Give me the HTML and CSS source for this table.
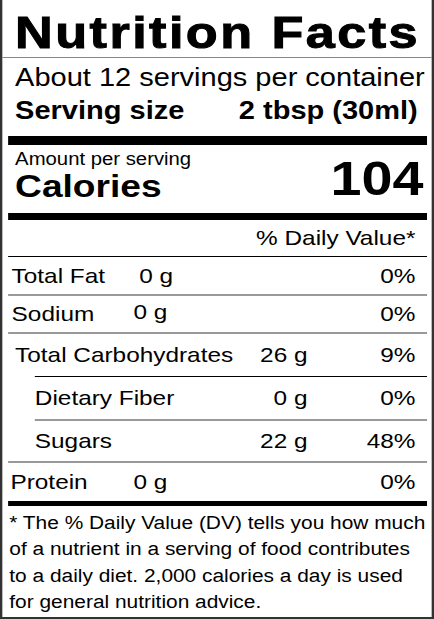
FILE: index.html
```html
<!DOCTYPE html>
<html lang="en">
<head>
    <meta charset="UTF-8">
    <meta name="viewport" content="width=device-width, initial-scale=1.0">
    <title>Nutrition Facts</title>
    <link rel="stylesheet" href="styles.css">
</head>
<body>
    <div class="label">
        <!-- 标题 -->
        <h1 class="title">Nutrition Facts</h1>
        <div class="serving">
            <p class="servings">About 12 servings per container</p>
            <p class="size"><span>Serving size</span><span>2 tbsp (30ml)</span></p>
        </div>
        <div class="bar bar-big"></div>
        <!-- 热量 -->
        <div class="calories">
            <div>
                <p class="amount">Amount per serving</p>
                <p class="cal-name">Calories</p>
            </div>
            <p class="cal-value">104</p>
        </div>
        <div class="bar bar-mid"></div>
        <p class="dv-head">% Daily Value*</p>
        <!-- 营养成分 -->
        <div class="row row-fat">
            <span class="name">Total Fat</span><span class="qty">0 g</span><span class="pct">0%</span>
        </div>
        <div class="row row-gray row-sodium">
            <span class="name">Sodium</span><span class="qty qty-up">0 g</span><span class="pct">0%</span>
        </div>
        <div class="row row-gray row-wide row-carbs">
            <span class="name">Total Carbohydrates</span><span class="qty">26 g</span><span class="pct">9%</span>
        </div>
        <div class="row row-wide row-sub row-fiber">
            <span class="name">Dietary Fiber</span><span class="qty">0 g</span><span class="pct">0%</span>
        </div>
        <div class="row row-wide row-sub row-gray row-sugars">
            <span class="name">Sugars</span><span class="qty">22 g</span><span class="pct">48%</span>
        </div>
        <div class="row row-gray row-protein">
            <span class="name">Protein</span><span class="qty">0 g</span><span class="pct">0%</span>
        </div>
        <div class="bar bar-small"></div>
        <p class="note">* The % Daily Value (DV) tells you how much of a nutrient in a serving of food contributes to a daily diet. 2,000 calories a day is used for general nutrition advice.</p>
    </div>
</body>
</html>
```

FILE: styles.css
```css
body {
    margin: 0;
    padding: 0;
    background: #fff;
    font-family: "Liberation Sans", Arial, sans-serif;
    color: #000;
    overflow: hidden;
}
p {
    margin: 0;
}
.label {
    box-sizing: border-box;
    width: 374px;
    height: 619px;
    border: 2px solid #333;
    border-top: none;
    padding: 0 4px 0 5px;
    transform: scaleX(1.1604);
    transform-origin: 0 0;
}

.title {
    margin: 0 -4px 0 -5px;
    padding: 10px 0 0 11px;
    height: 47px;
    font-size: 45px;
    line-height: 46px;
    font-weight: bold;
    letter-spacing: 2.1px;
    -webkit-text-stroke: 1px #000;
    border-bottom: 1px solid #888;
    white-space: nowrap;
}

.serving {
    padding: 4px 8px 0 6px;
}
.servings {
    font-size: 25px;
    line-height: 30px;
    white-space: nowrap;
}
.size {
    display: flex;
    justify-content: space-between;
    margin-top: 3px;
    font-size: 25px;
    line-height: 30px;
    font-weight: bold;
}

.bar {
    background: #000;
}
.bar-big {
    height: 9px;
    margin-top: 11px;
}
.bar-mid {
    height: 7px;
}
.bar-small {
    height: 5px;
}

.calories {
    display: flex;
    justify-content: space-between;
    align-items: flex-end;
    height: 68px;
    padding: 0 3px 0 6px;
}
.amount {
    font-size: 17.5px;
    line-height: 20px;
    padding-top: 6px;
}
.cal-name {
    font-size: 32px;
    line-height: 34px;
    font-weight: bold;
    padding-bottom: 10px;
}
.cal-value {
    font-size: 48px;
    line-height: 50px;
    font-weight: bold;
    padding-bottom: 9px;
}

.dv-head {
    text-align: right;
    font-size: 21px;
    line-height: 36px;
    padding-right: 10px;
    border-bottom: 1px solid #000;
}

.row {
    box-sizing: border-box;
    display: flex;
    align-items: center;
    font-size: 21px;
    padding: 0 10px 0 3px;
}
.row-gray {
    border-top: 2px solid #999;
}
.row-fat {
    height: 37px;
}
.row-sodium {
    height: 38px;
}
.row-carbs {
    height: 44px;
}
.row-fiber {
    height: 43px;
}
.row-sugars {
    height: 42px;
}
.row-protein {
    height: 40px;
    padding-left: 2px;
}
.row .name {
    width: 110px;
}
.row .qty {
    flex: 1;
}
.row .qty-up {
    margin: -5px 0 0 -5px;
}
.row-protein .qty {
    margin-left: -4px;
}
.row-wide {
    padding-left: 6px;
}
.row-wide .name {
    width: auto;
    flex: 1;
}
.row-wide .qty {
    flex: none;
    text-align: right;
    margin-right: 43px;
}
.row-wide .pct {
    width: 50px;
    text-align: right;
}
.row-sub {
    border-top: 1px solid #000;
    margin-left: 23px;
    padding-left: 0;
}
.row-sub.row-gray {
    border-top: 2px solid #999;
}

.note {
    font-size: 18px;
    line-height: 26.6px;
    padding: 3.5px 0 0 1px;
}
```
